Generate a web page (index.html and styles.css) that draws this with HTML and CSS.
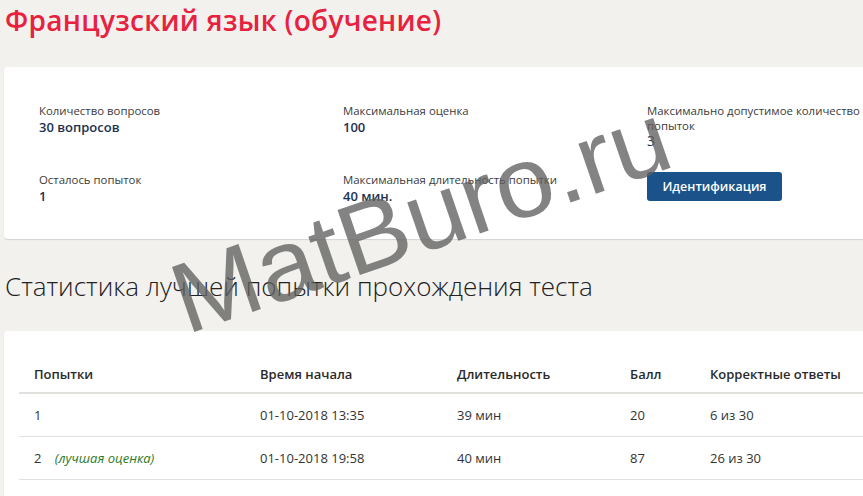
FILE: index.html
```html
<!DOCTYPE html>
<html lang="ru">
<head>
<meta charset="utf-8">
<title>Французский язык (обучение)</title>
<link rel="stylesheet" href="styles.css">
</head>
<body>
<div class="page">
  <h1 class="title">Французский язык (обучение)</h1>
  <section class="card info">
    <div class="info-grid">
      <div class="item">
        <div class="label">Количество вопросов</div>
        <div class="value">30 вопросов</div>
      </div>
      <div class="item">
        <div class="label">Максимальная оценка</div>
        <div class="value">100</div>
      </div>
      <div class="item">
        <div class="label">Максимально допустимое количество попыток</div>
        <div class="value plain">3</div>
      </div>
      <div class="item">
        <div class="label">Осталось попыток</div>
        <div class="value">1</div>
      </div>
      <div class="item">
        <div class="label">Максимальная длительность попытки</div>
        <div class="value">40 мин.</div>
      </div>
      <div class="item">
        <button class="btn">Идентификация</button>
      </div>
    </div>
  </section>
  <h2 class="subtitle">Статистика лучшей попытки прохождения теста</h2>
  <section class="card stats">
    <table class="table">
      <colgroup>
        <col class="c1"><col class="c2"><col class="c3"><col class="c4"><col class="c5">
      </colgroup>
      <thead>
        <tr><th>Попытки</th><th>Время начала</th><th>Длительность</th><th>Балл</th><th>Корректные ответы</th></tr>
      </thead>
      <tbody>
        <tr><td>1</td><td>01-10-2018 13:35</td><td>39 мин</td><td>20</td><td>6 из 30</td></tr>
        <tr><td>2 <span class="best">(лучшая оценка)</span></td><td>01-10-2018 19:58</td><td>40 мин</td><td>87</td><td>26 из 30</td></tr>
      </tbody>
    </table>
  </section>
</div>
<div class="watermark">MatBuro.ru</div>
</body>
</html>
```
FILE: styles.css
```css
html, body {
  margin: 0;
  padding: 0;
}
body {
  background: #f2f1ee;
  width: 863px;
  height: 496px;
  overflow: hidden;
  position: relative;
  font-family: "Open Sans", "Noto Sans", sans-serif;
  color: #333;
}
.page {
  width: 900px;
  padding-left: 4px;
}
.title {
  margin: 0;
  padding: 2px 0 0 1px;
  height: 67px;
  box-sizing: border-box;
  font-size: 28px;
  font-weight: 600;
  color: #e8213f;
  line-height: 36px;
  letter-spacing: 0.3px;
}
.card {
  background: #fff;
  border-radius: 4px;
  box-shadow: 0 1px 1px rgba(0,0,0,0.12);
}
.info {
  height: 172px;
  box-sizing: border-box;
  padding: 37px 0 0 35px;
}
.info-grid {
  display: grid;
  grid-template-columns: 304px 304px 228px;
  row-gap: 24px;
}
.label {
  font-size: 11.4px;
  line-height: 14.5px;
  color: #3b3b3b;
}
.value {
  font-size: 13px;
  font-weight: 600;
  line-height: 16px;
  color: #1c3152;
}
.value.plain {
  font-weight: 400;
  font-size: 14px;
}
.btn {
  margin-top: -1px;
  width: 135px;
  height: 29px;
  border: 0;
  border-radius: 3px;
  background: #1b528a;
  color: #fff;
  font-family: "Open Sans", sans-serif;
  font-size: 12.5px;
  font-weight: 600;
  padding: 0;
}
.subtitle {
  margin: 0;
  height: 92px;
  box-sizing: border-box;
  padding: 30px 0 0 1px;
  font-size: 26px;
  font-weight: 300;
  line-height: 34px;
  color: #222;
}
.stats {
  height: 200px;
  padding: 25px 0 0 15px;
  box-sizing: border-box;
}
.table {
  border-collapse: collapse;
  width: 860px;
  font-size: 13px;
  color: #333;
}
.c1 { width: 226px; }
.c2 { width: 197px; }
.c3 { width: 173px; }
.c4 { width: 80px; }
.table th {
  text-align: left;
  font-weight: 600;
  padding: 0 15px;
  height: 36px;
  color: #2a2a2a;
  border-bottom: 2px solid #e2e0dc;
}
.table td {
  padding: 0 15px;
  height: 42px;
  border-bottom: 1px solid #e2e0dc;
}
.best {
  margin-left: 10px;
  font-style: italic;
  font-size: 13px;
  color: #2a7a1f;
}
.watermark {
  position: absolute;
  left: 173px;
  top: 167px;
  font-family: "Liberation Sans", Arial, sans-serif;
  font-size: 100px;
  line-height: 1;
  color: rgba(96, 96, 96, 0.78);
  transform: rotate(-19deg) scaleX(1.05);
  transform-origin: center;
  white-space: nowrap;
  pointer-events: none;
}
```
